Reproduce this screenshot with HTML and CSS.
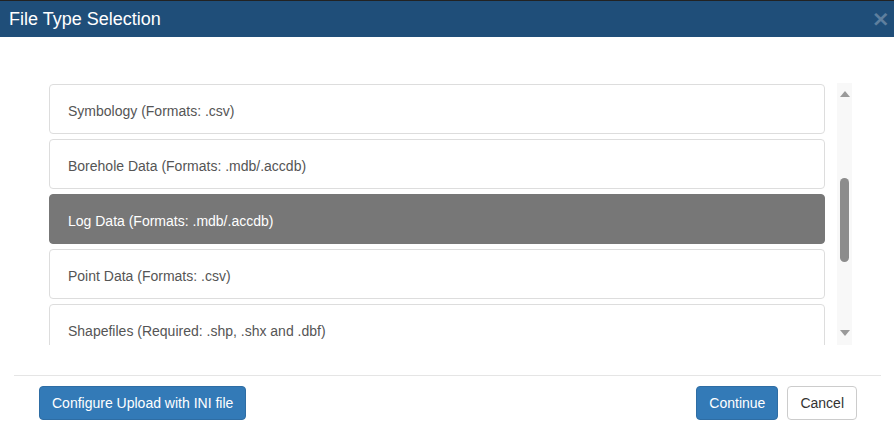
FILE: index.html
```html
<!DOCTYPE html>
<html>
<head>
<meta charset="utf-8">
<link rel="stylesheet" href="styles.css">
</head>
<body>
<div class="modal">
  <div class="modal-header">
    <h4 class="modal-title">File Type Selection</h4>
    <span class="close">&times;</span>
  </div>
  <div class="modal-body">
    <div class="list-wrap">
      <div class="list">
        <div class="item">Symbology (Formats: .csv)</div>
        <div class="item">Borehole Data (Formats: .mdb/.accdb)</div>
        <div class="item active">Log Data (Formats: .mdb/.accdb)</div>
        <div class="item">Point Data (Formats: .csv)</div>
        <div class="item">Shapefiles (Required: .shp, .shx and .dbf)</div>
      </div>
      <div class="scrollbar">
        <div class="arrow up"></div>
        <div class="track"><div class="thumb"></div></div>
        <div class="arrow down"></div>
      </div>
    </div>
  </div>
  <div class="modal-footer">
    <button class="btn btn-primary">Configure Upload with INI file</button>
    <div class="right">
      <button class="btn btn-primary">Continue</button>
      <button class="btn btn-default">Cancel</button>
    </div>
  </div>
</div>
</body>
</html>
```
FILE: styles.css
```css
* { box-sizing: border-box; }
html, body { margin: 0; padding: 0; background: #fff; }
body { font-family: "Liberation Sans", Arial, sans-serif; font-size: 14px; color: #555; }
.modal { width: 894px; height: 440px; background: #fff; border-top: 1px solid #222; display: flex; flex-direction: column; }
.modal-header { height: 36px; background: #1f4e79; display: flex; align-items: center; justify-content: space-between; padding: 0 4px 0 9px; }
.modal-title { margin: 0; color: #fff; font-size: 18px; font-weight: normal; line-height: 20px; }
.close { color: #fff; opacity: 0.28; font-size: 22px; font-weight: bold; line-height: 20px; font-family: "DejaVu Sans", sans-serif; }
.modal-body { padding: 46px 42px 30px 49px; }
.list-wrap { display: flex; height: 262px; }
.list { width: 776px; overflow: hidden; padding-top: 1px; }
.item { height: 50px; border: 1px solid #ddd; border-radius: 4px; padding: 4px 18px 0 18px; display: flex; align-items: center; margin-bottom: 5px; color: #555; }
.item.active { background: #777; border-color: #777; color: #fff; }
.scrollbar { width: 15px; margin-left: 12px; background: #f8f8f8; display: flex; flex-direction: column; align-items: center; }
.arrow { width: 0; height: 0; border-left: 5px solid transparent; border-right: 5px solid transparent; }
.arrow.up { border-bottom: 6px solid #9a9a9a; margin-top: 8px; }
.arrow.down { border-top: 6px solid #9a9a9a; margin-bottom: 9px; }
.track { flex: 1; width: 100%; position: relative; }
.thumb { position: absolute; left: 3px; top: 81px; width: 9px; height: 84px; border-radius: 5px; background: #8c8c8c; }
.modal-footer { margin: 0 13px 0 14px; border-top: 1px solid #e5e5e5; padding: 10px 24px 0 25px; display: flex; justify-content: space-between; align-items: flex-start; }
.right { display: flex; gap: 9px; }
.btn { font-family: "Liberation Sans", Arial, sans-serif; font-size: 14px; line-height: 20px; padding: 6px 12px; border-radius: 4px; border: 1px solid transparent; height: 34px; }
.btn-primary { background: #337ab7; border-color: #2e6da4; color: #fff; }
.btn-default { background: #fff; border-color: #ccc; color: #333; }
```
